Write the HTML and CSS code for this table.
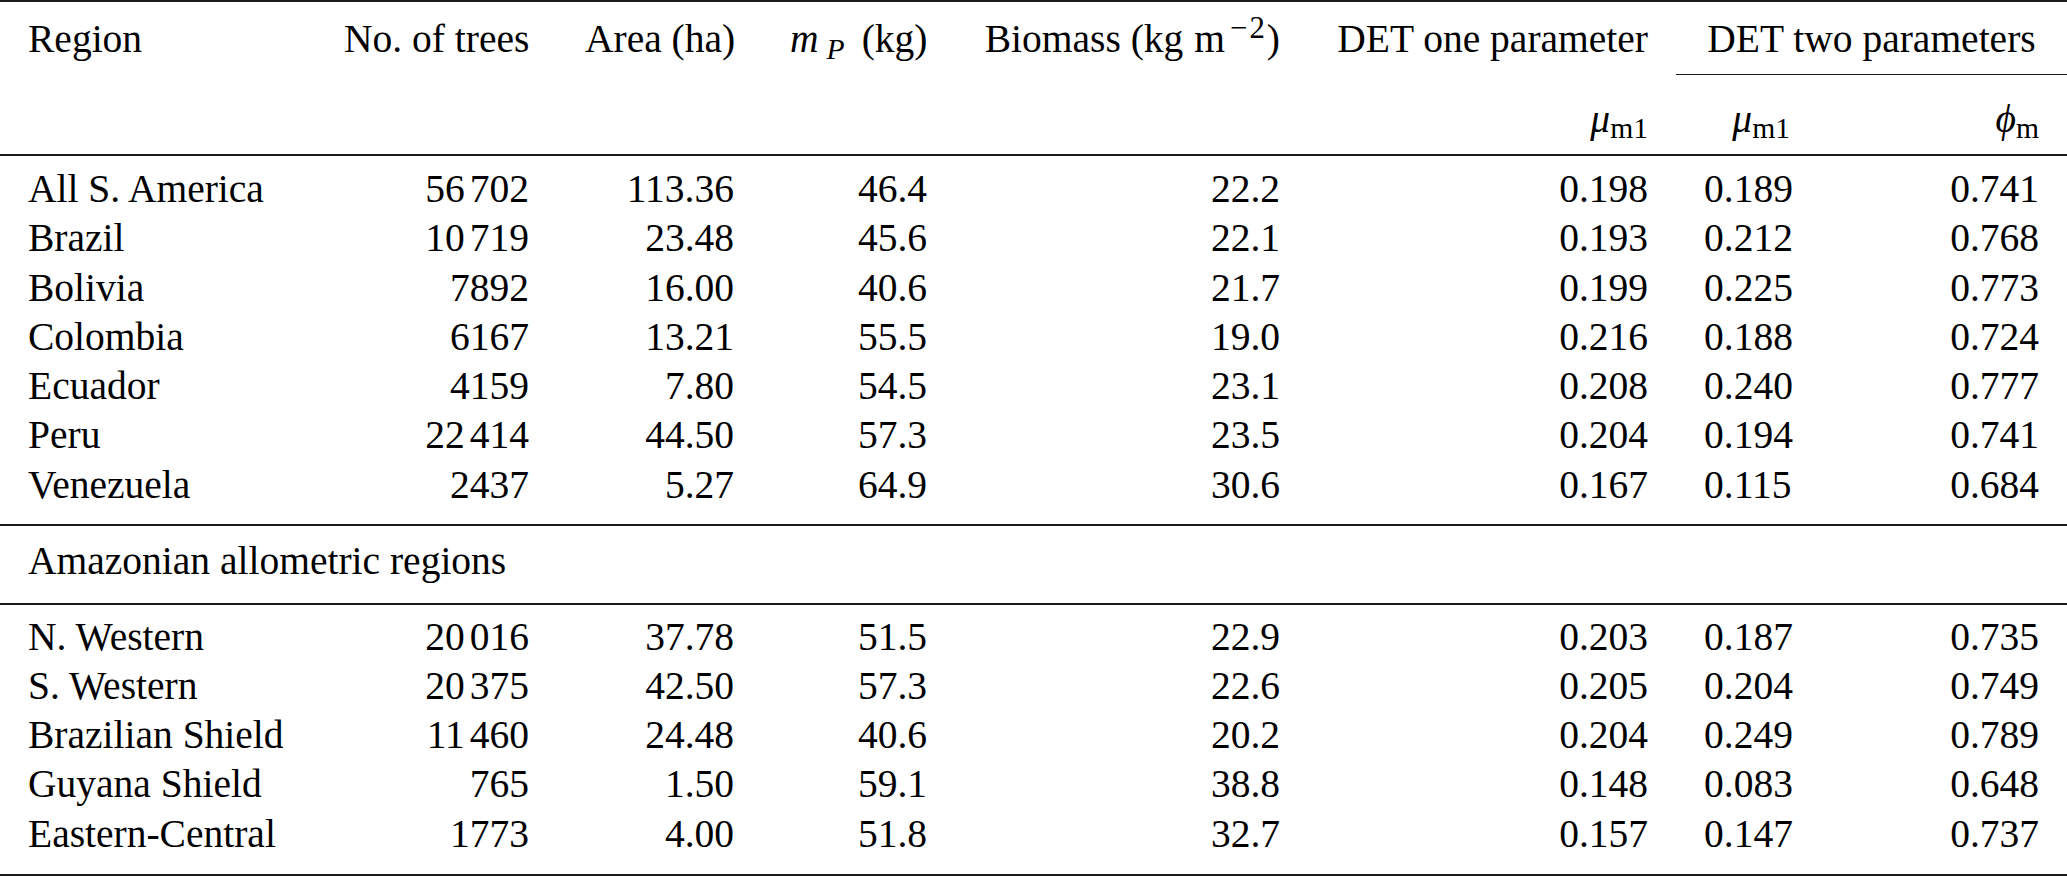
FILE: index.html
```html
<!DOCTYPE html>
<html lang="en">
<head>
<meta charset="utf-8">
<title>Tree biomass by region</title>
<link rel="stylesheet" href="styles.css">
</head>
<body>
<table class="tbl">
  <colgroup>
    <col class="c1"><col class="c2"><col class="c3"><col class="c4"><col class="c5"><col class="c6"><col class="c7"><col class="c8">
  </colgroup>
  <thead>
    <tr class="h1">
      <th class="l">Region</th>
      <th>No. of trees</th>
      <th>Area (ha)</th>
      <th><i class="mi">m</i><span class="sb sbp">P</span><span class="gap"></span>(kg)</th>
      <th>Biomass (kg<span class="thin"></span>m<span class="sp">−2</span>)</th>
      <th>DET one parameter</th>
      <th class="grp" colspan="2">DET two parameters</th>
    </tr>
    <tr class="h2">
      <th></th><th></th><th></th><th></th><th></th>
      <th><i class="mi">μ</i><span class="sb">m1</span></th>
      <th><i class="mi">μ</i><span class="sb">m1</span></th>
      <th><i class="mi">ϕ</i><span class="sb">m</span></th>
    </tr>
  </thead>
  <tbody class="sec1">
    <tr><td class="l">All S. America</td><td>56<span class="ts"></span>702</td><td>113.36</td><td>46.4</td><td>22.2</td><td>0.198</td><td>0.189</td><td>0.741</td></tr>
    <tr><td class="l">Brazil</td><td>10<span class="ts"></span>719</td><td>23.48</td><td>45.6</td><td>22.1</td><td>0.193</td><td>0.212</td><td>0.768</td></tr>
    <tr><td class="l">Bolivia</td><td>7892</td><td>16.00</td><td>40.6</td><td>21.7</td><td>0.199</td><td>0.225</td><td>0.773</td></tr>
    <tr><td class="l">Colombia</td><td>6167</td><td>13.21</td><td>55.5</td><td>19.0</td><td>0.216</td><td>0.188</td><td>0.724</td></tr>
    <tr><td class="l">Ecuador</td><td>4159</td><td>7.80</td><td>54.5</td><td>23.1</td><td>0.208</td><td>0.240</td><td>0.777</td></tr>
    <tr><td class="l">Peru</td><td>22<span class="ts"></span>414</td><td>44.50</td><td>57.3</td><td>23.5</td><td>0.204</td><td>0.194</td><td>0.741</td></tr>
    <tr><td class="l">Venezuela</td><td>2437</td><td>5.27</td><td>64.9</td><td>30.6</td><td>0.167</td><td>0.115</td><td>0.684</td></tr>
  </tbody>
  <tbody class="sec2">
    <tr><td class="l" colspan="8">Amazonian allometric regions</td></tr>
  </tbody>
  <tbody class="sec3">
    <tr><td class="l">N. Western</td><td>20<span class="ts"></span>016</td><td>37.78</td><td>51.5</td><td>22.9</td><td>0.203</td><td>0.187</td><td>0.735</td></tr>
    <tr><td class="l">S. Western</td><td>20<span class="ts"></span>375</td><td>42.50</td><td>57.3</td><td>22.6</td><td>0.205</td><td>0.204</td><td>0.749</td></tr>
    <tr><td class="l">Brazilian Shield</td><td>11<span class="ts"></span>460</td><td>24.48</td><td>40.6</td><td>20.2</td><td>0.204</td><td>0.249</td><td>0.789</td></tr>
    <tr><td class="l">Guyana Shield</td><td>765</td><td>1.50</td><td>59.1</td><td>38.8</td><td>0.148</td><td>0.083</td><td>0.648</td></tr>
    <tr><td class="l">Eastern-Central</td><td>1773</td><td>4.00</td><td>51.8</td><td>32.7</td><td>0.157</td><td>0.147</td><td>0.737</td></tr>
  </tbody>
</table>
</body>
</html>
```

FILE: styles.css
```css
html, body {
  margin: 0;
  padding: 0;
  background: #ffffff;
}

body {
  font-family: "Liberation Serif", "Times New Roman", "DejaVu Serif", serif;
  color: #000000;
}

.tbl {
  width: 2067px;
  table-layout: fixed;
  border-collapse: separate;
  border-spacing: 0;
  border-top: 2px solid #1a1a1a;
  border-bottom: 2px solid #1a1a1a;
  font-size: 39.5px;
  line-height: 49.25px;
}

.c1 { width: 316px; }
.c2 { width: 241px; }
.c3 { width: 205px; }
.c4 { width: 193px; }
.c5 { width: 353px; }
.c6 { width: 368px; }
.c7 { width: 142px; }
.c8 { width: 249px; }

.tbl th,
.tbl td {
  box-sizing: border-box;
  padding: 0 28px;
  text-align: right;
  font-weight: normal;
  white-space: nowrap;
  vertical-align: baseline;
}

.tbl .l {
  text-align: left;
}

.h1 > th {
  padding-top: 13px;
  padding-bottom: 9.75px;
}

.h1 > .grp {
  text-align: center;
  border-bottom: 1px solid #1a1a1a;
}

.h2 > th {
  padding-top: 20px;
  padding-bottom: 9.75px;
}

.tbl tbody tr:first-child > td {
  border-top: 2px solid #1a1a1a;
}

.sec1 tr:first-child > td { padding-top: 9px; }
.sec1 tr:last-child > td { padding-bottom: 14.5px; }

.sec2 td {
  padding-top: 11px;
  padding-bottom: 16px;
}

.sec3 tr:first-child > td { padding-top: 8px; }
.sec3 tr:last-child > td { padding-bottom: 15.25px; }

.ts {
  display: inline-block;
  width: 5px;
}

.mi {
  font-style: italic;
}

.sb {
  font-size: 75%;
  line-height: 0;
  vertical-align: -6px;
}

.sbp {
  font-style: italic;
  margin-left: 8px;
  vertical-align: -7px;
}

.sp {
  font-size: 78%;
  line-height: 0;
  vertical-align: 14px;
  margin-left: 5px;
  letter-spacing: 2px;
}

.gap {
  display: inline-block;
  width: 17px;
}

.thin {
  display: inline-block;
  width: 11px;
}
```
